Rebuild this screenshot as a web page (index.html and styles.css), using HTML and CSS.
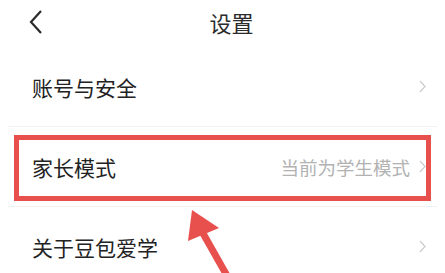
FILE: index.html
```html
<!DOCTYPE html>
<html lang="zh-CN">
<head>
  <meta charset="UTF-8" />
  <meta name="viewport" content="width=device-width, initial-scale=1.0"/>
  <title>设置</title>
  <link rel="stylesheet" href="styles.css">
</head>
<body>
  <div class="page">
    <div class="header">
      <div class="back">
        <svg width="14" height="24" viewBox="0 0 14 24">
          <polyline points="12,1 2,12 12,23" fill="none" stroke="#2b2b2b" stroke-width="2.2" stroke-linejoin="miter"/>
        </svg>
      </div>
      <div class="title">设置</div>
      <div></div>
    </div>

    <ul class="menu">
      <li class="item">
        <span class="label">账号与安全</span>
        <span class="right">
          <svg class="chev" width="7" height="13" viewBox="0 0 7 13"><polyline points="1,1 6,6.5 1,12" fill="none" stroke="#cdcdcd" stroke-width="1.3"/></svg>
        </span>
      </li>
      <li class="item">
        <span class="label">家长模式</span>
        <span class="right">
          <span class="value">当前为学生模式</span>
          <svg class="chev" width="7" height="13" viewBox="0 0 7 13"><polyline points="1,1 6,6.5 1,12" fill="none" stroke="#cdcdcd" stroke-width="1.3"/></svg>
        </span>
      </li>
      <li class="item">
        <span class="label">关于豆包爱学</span>
        <span class="right">
          <svg class="chev" width="7" height="13" viewBox="0 0 7 13"><polyline points="1,1 6,6.5 1,12" fill="none" stroke="#cdcdcd" stroke-width="1.3"/></svg>
        </span>
      </li>
    </ul>

    <!-- annotation -->
    <div class="mark"></div>
    <svg class="arrow" width="60" height="70" viewBox="0 0 60 70">
      <line x1="20" y1="22" x2="50" y2="75" stroke="#e8504e" stroke-width="7"/>
      <polygon points="12,4 8,35 39,22" fill="#e8504e"/>
    </svg>
  </div>
</body>
</html>
```

FILE: styles.css
```css
body {
  margin: 0;
  background: #fff;
  font-family: "Noto Sans CJK SC", "Noto Sans", sans-serif;
  color: #222;
  overflow: hidden;
}

.page {
  position: relative;
  width: 445px;
  height: 273px;
  overflow: hidden;
}

.header {
  height: 44px;
  display: grid;
  grid-template-columns: 60px 1fr 42px;
  align-items: center;
  padding-bottom: 3px;
}

.back {
  padding-left: 29px;
  display: flex;
  align-items: center;
}

.back svg {
  display: block;
}

.title {
  text-align: center;
  font-size: 22px;
  color: #2b2b2b;
}

.menu {
  list-style: none;
  margin: 0;
  padding: 0 8px;
}

.item {
  height: 79px;
  display: flex;
  align-items: center;
  justify-content: space-between;
  padding: 0 11px 0 24px;
  border-bottom: 1px solid #f1f1f1;
}

.label {
  font-size: 21px;
  color: #222;
}

.right {
  display: flex;
  align-items: center;
  gap: 9px;
}

.value {
  font-size: 18.5px;
  color: #b2b2b2;
}

.chev {
  display: block;
}

.mark {
  position: absolute;
  left: 14px;
  top: 135px;
  width: 407px;
  height: 56px;
  border: 5px solid #e8504e;
}

.arrow {
  position: absolute;
  left: 180px;
  top: 206px;
}
```
